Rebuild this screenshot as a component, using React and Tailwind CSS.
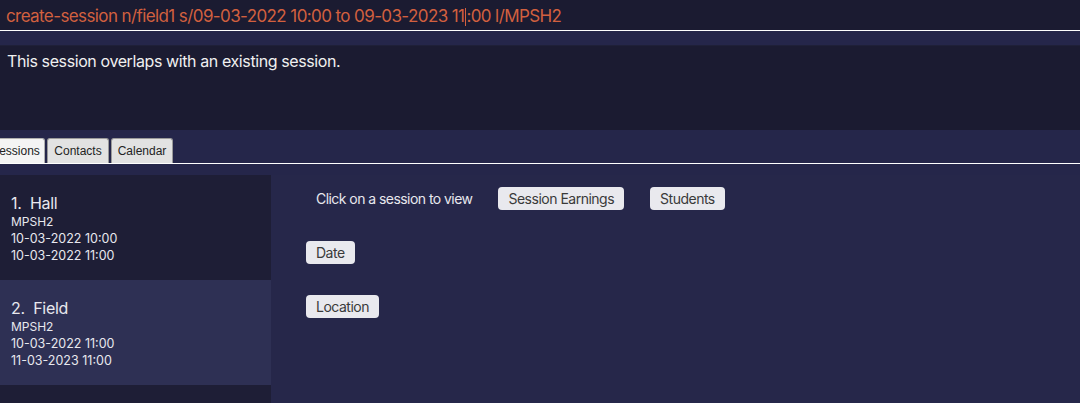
import React from 'react';

const sessions = [
  { idx: 1, name: 'Hall', loc: 'MPSH2', start: '10-03-2022 10:00', end: '10-03-2022 11:00' },
  { idx: 2, name: 'Field', loc: 'MPSH2', start: '10-03-2022 11:00', end: '11-03-2023 11:00' },
];

function Pill({ children }) {
  return (
    <span className="inline-flex h-[23px] items-center rounded-[4px] bg-[#e9e9ee] px-[10px] text-[14px] tracking-[-0.5px] text-[#3a3a3a]">
      {children}
    </span>
  );
}

function SessionCell({ s, selected }) {
  return (
    <div className={`h-[105px] pl-[11px] pt-[18px] text-[#e8e8ee] ${selected ? 'bg-[#2e3054]' : 'bg-[#1e1e36]'}`}>
      <div className="text-[16px] leading-[20px] tracking-[-0.3px]">{s.idx}.&nbsp; {s.name}</div>
      <div className="text-[12px] leading-[17px]">{s.loc}</div>
      <div className="text-[12.5px] leading-[17px]">{s.start}</div>
      <div className="text-[12.5px] leading-[17px]">{s.end}</div>
    </div>
  );
}

export default function App() {
  return (
    <div className="flex h-[403px] w-[1080px] flex-col overflow-hidden bg-[#25264a] font-['Inter',sans-serif]">
      {/* command box */}
      <div className="flex h-[30px] items-center bg-[#1b1b31] pl-[6px] pt-[3px] text-[17px] tracking-[-0.6px] text-[#d2603f]">
        <span>create-session n/field1 s/09-03-2022 10:00 to 09-03-2023 11</span>
        <span className="mx-[0.5px] inline-block h-[18px] w-px bg-[#d2603f]" />
        <span>:00 l/MPSH2</span>
      </div>
      <div className="h-px bg-white" />
      <div className="h-[15px] border-b border-[#1f2038] bg-[#25264a]" />

      {/* result box */}
      <div className="h-[84px] bg-[#1b1b31] pl-[7px] pt-[5px] text-[16px] leading-[20px] tracking-[-0.4px] text-[#f0f0f0]">
        This session overlaps with an existing session.
      </div>

      {/* tabs */}
      <div className="flex h-[34px] items-end bg-[#25264a] pt-[8px]">
        <div className="flex h-[26px] w-full items-stretch border-b border-white">
          <div className="-ml-[14px] flex w-[59px] items-center justify-center rounded-t-[3px] border border-b-0 border-[#b0b0b0] bg-[#f4f4f4] text-[12px] text-[#222] font-['Liberation_Sans',sans-serif]">
            Sessions
          </div>
          <div className="ml-[2px] flex w-[62px] items-center justify-center rounded-t-[3px] border border-b-0 border-[#9a9a9a] bg-[#e2e2e2] text-[12px] text-[#222] font-['Liberation_Sans',sans-serif]">
            Contacts
          </div>
          <div className="ml-[2px] flex w-[62px] items-center justify-center rounded-t-[3px] border border-b-0 border-[#9a9a9a] bg-[#e2e2e2] text-[12px] text-[#222] font-['Liberation_Sans',sans-serif]">
            Calendar
          </div>
        </div>
      </div>

      {/* body */}
      <div className="flex flex-1 pt-[11px]">
        <div className="w-[271px] bg-[#1e1e36]">
          {sessions.map((s) => (
            <SessionCell key={s.idx} s={s} selected={s.idx === 2} />
          ))}
        </div>
        <div className="flex-1 bg-[#26274a] pl-[35px] pt-[12px] text-[14px]">
          <div className="flex items-center">
            <span className="ml-[10px] tracking-[-0.55px] text-[#e8e8ee]">Click on a session to view</span>
            <span className="ml-[26px]"><Pill>Session Earnings</Pill></span>
            <span className="ml-[26px]"><Pill>Students</Pill></span>
          </div>
          <div className="mt-[31px]"><Pill>Date</Pill></div>
          <div className="mt-[31px]"><Pill>Location</Pill></div>
        </div>
      </div>
    </div>
  );
}
